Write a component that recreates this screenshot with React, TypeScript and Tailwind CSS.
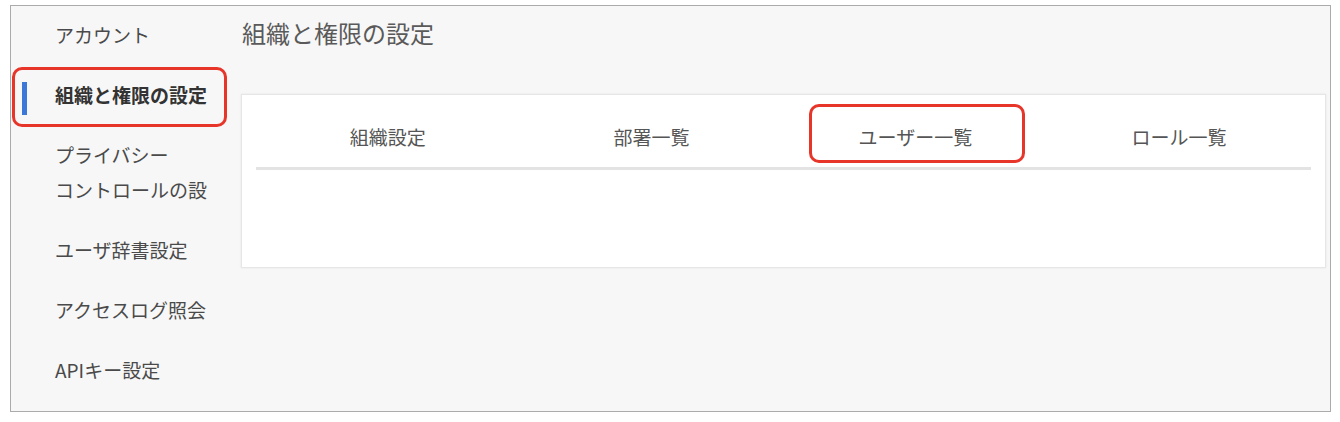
import React from "react";

const font = { fontFamily: '"Noto Sans CJK JP", "Noto Sans", sans-serif' };

type Item = { lines: string[]; active?: boolean };

const items: Item[] = [
  { lines: ["アカウント"] },
  { lines: ["組織と権限の設定"], active: true },
  { lines: ["プライバシー", "コントロールの設"] },
  { lines: ["ユーザ辞書設定"] },
  { lines: ["アクセスログ照会"] },
  { lines: ["APIキー設定"] },
];

const tabs = ["組織設定", "部署一覧", "ユーザー一覧", "ロール一覧"];

export default function App() {
  return (
    <div className="w-[1340px] h-[422px] bg-white pt-[5px] pl-[10px]" style={font}>
      <div className="flex w-[1321px] h-[407px] border border-[#ababab] bg-[#f7f7f7]">
        {/* Sidebar */}
        <div className="flex flex-col w-[230px] shrink-0 pt-[1px]">
          {items.map((it, i) => (
            <div
              key={i}
              className={
                it.active
                  ? "relative pl-[44px] pt-[10px] pb-[15px] text-[19px] leading-[35px] font-bold text-[#333333]"
                  : "relative pl-[44px] pt-[10px] pb-[15px] text-[19px] leading-[35px] text-[#4a4a4a]"
              }
            >
              {it.active && (
                <>
                  <span className="absolute left-[11px] top-[15px] w-[5px] h-[33px] bg-[#3b78d8]" />
                  <span className="absolute left-[1px] top-0 w-[215px] h-[60px] rounded-[10px] border-[3px] border-[#e8352a]" />
                </>
              )}
              {it.lines.map((l, j) => (
                <div key={j} className="whitespace-nowrap">
                  {l}
                </div>
              ))}
            </div>
          ))}
        </div>

        {/* Main */}
        <div className="flex flex-col flex-1 pr-[4px] pt-[11px]">
          <div className="text-[24px] leading-[32px] text-[#5a5a5a] pl-[1px]">組織と権限の設定</div>
          <div className="mt-[45px] h-[174px] bg-white border border-[#e6e6e6] shadow-[0_0_2px_rgba(0,0,0,0.08)] px-[14px]">
            <div className="flex border-b-[3px] border-[#e3e3e3]">
              {tabs.map((t, i) => (
                <div
                  key={i}
                  className="relative flex-1 text-center pt-[29px] pb-[17px] text-[19px] leading-[26px] text-[#555555]"
                >
                  {t}
                  {i === 2 && (
                    <span className="absolute left-[25px] right-[22px] top-[9px] h-[59px] rounded-[10px] border-[3px] border-[#e8352a]" />
                  )}
                </div>
              ))}
            </div>
          </div>
        </div>
      </div>
    </div>
  );
}
